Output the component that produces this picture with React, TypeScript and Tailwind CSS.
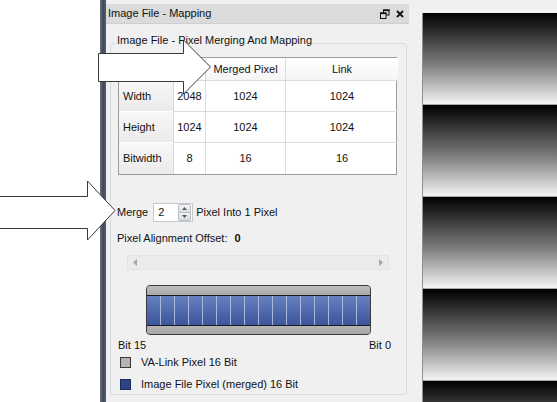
const rows = [
  { label: "Width", source: "2048", merged: "1024", link: "1024" },
  { label: "Height", source: "1024", merged: "1024", link: "1024" },
  { label: "Bitwidth", source: "8", merged: "16", link: "16" },
];

const bits = Array.from({ length: 16 }, (_, i) => i);

function SpinBox({ value }: { value: string }) {
  return (
    <div className="flex items-center w-[40px] h-[19px] bg-white border border-[#c5c8ce]">
      <span className="flex-1 pl-[4px] leading-none">{value}</span>
      <div className="flex flex-col w-[13px] h-[17px] mr-[1px]">
        <div className="flex-1 flex items-center justify-center bg-gradient-to-b from-[#f6f6f6] to-[#dedede] border border-[#b8bcc4] rounded-t-[2px]">
          <svg width="5" height="3" viewBox="0 0 5 3">
            <path d="M0 3 L2.5 0 L5 3 Z" fill="#4a5a78" />
          </svg>
        </div>
        <div className="flex-1 flex items-center justify-center bg-gradient-to-b from-[#f2f2f2] to-[#dadada] border border-t-0 border-[#b8bcc4] rounded-b-[2px]">
          <svg width="5" height="3" viewBox="0 0 5 3">
            <path d="M0 0 L2.5 3 L5 0 Z" fill="#4a5a78" />
          </svg>
        </div>
      </div>
    </div>
  );
}

function MappingTable() {
  return (
    <div className="ml-[7px] mt-[13px] w-[279px] grid grid-cols-[55px_32px_80px_112px] border border-[#9c9c9c] bg-white">
      {/* header row */}
      <div className="h-[23px] bg-[#f4f4f4] border-r border-b border-[#dcdcdc]" />
      <div className="h-[23px] bg-white border-r border-b border-[#dcdcdc]" />
      <div className="h-[23px] flex items-center justify-center bg-gradient-to-b from-white to-[#f5f5f5] border-r border-b border-[#dcdcdc]">
        Merged Pixel
      </div>
      <div className="h-[23px] flex items-center justify-center bg-gradient-to-b from-white to-[#f5f5f5] border-b border-[#dcdcdc]">
        Link
      </div>

      {rows.map((row, index) => {
        const last = index === rows.length - 1;
        return [
          <div
            key={row.label}
            className={`h-[31px] flex items-center pl-[4px] bg-gradient-to-b from-[#f7f7f7] to-[#ebebeb] border-r border-[#d6d6d6] ${last ? "" : "border-b border-b-white"}`}
          >
            {row.label}
          </div>,
          <div
            key={row.label + "-src"}
            className={`h-[31px] flex items-center justify-center border-r border-[#dcdcdc] ${last ? "" : "border-b"}`}
          >
            {row.source}
          </div>,
          <div
            key={row.label + "-merged"}
            className={`h-[31px] flex items-center justify-center border-r border-[#dcdcdc] ${last ? "" : "border-b"}`}
          >
            {row.merged}
          </div>,
          <div
            key={row.label + "-link"}
            className={`h-[31px] flex items-center justify-center border-[#dcdcdc] ${last ? "" : "border-b"}`}
          >
            {row.link}
          </div>,
        ];
      })}
    </div>
  );
}

function BitBar() {
  return (
    <div className="ml-[35px] mt-[15px] w-[225px] h-[50px] flex flex-col rounded-[4px] border border-[#3c3c3c] bg-[#b2b2b2] overflow-hidden">
      <div className="h-[9px] bg-gradient-to-b from-[#bdbdbd] to-[#a9a9a9]" />
      <div className="h-[31px] flex border-y border-[#1c1c1c] bg-gradient-to-b from-[#6581c0] to-[#3d559b]">
        {bits.map((b) => (
          <div
            key={b}
            className={`flex-1 ${b < bits.length - 1 ? "border-r border-[#a9b7d8]" : ""}`}
          />
        ))}
      </div>
      <div className="flex-1 bg-gradient-to-b from-[#b5b5b5] to-[#a6a6a6]" />
    </div>
  );
}

export default function App() {
  return (
    <div className="relative w-[557px] h-[402px] overflow-hidden flex bg-white text-[11px] leading-[13px] text-[#111] font-['Liberation_Sans',Arial,sans-serif]">
      <div className="w-[100px] shrink-0" />

      {/* docked panel */}
      <div className="w-[322px] shrink-0 flex bg-[#f0f0f0]">
        <div className="w-[6px] bg-gradient-to-r from-[#6d7585] via-[#3f4757] to-[#565e6e]" />
        <div className="flex-1 flex flex-col pt-[4px]">
          {/* title bar */}
          <div className="w-[303px] h-[20px] flex items-center pl-[2px] pr-[5px] bg-[#dbdbdb] border-b border-[#cfcfcf]">
            <span className="flex-1">Image File - Mapping</span>
            <svg width="10" height="10" viewBox="0 0 10 10" className="mr-[6px]">
              <rect x="3.5" y="1" width="5.5" height="5" fill="none" stroke="#111" strokeWidth="1" />
              <rect x="3" y="0.5" width="6.5" height="1.6" fill="#111" />
              <rect x="0.5" y="4" width="5.5" height="5.5" fill="#dbdbdb" stroke="#111" strokeWidth="1" />
              <rect x="0" y="3.5" width="6.5" height="1.6" fill="#111" />
            </svg>
            <svg width="8" height="8" viewBox="0 0 8 8">
              <path d="M1 1 L7 7 M7 1 L1 7" stroke="#111" strokeWidth="1.8" />
            </svg>
          </div>

          {/* group box */}
          <div className="relative ml-[4px] mt-[19px] w-[297px] h-[352px] flex flex-col border border-[#d5dde3] rounded-[3px]">
            <span className="absolute top-[-10px] left-[5px] px-[1px] bg-[#f0f0f0]">
              Image File - Pixel Merging And Mapping
            </span>

            <MappingTable />

            <div className="mt-[28px] pl-[6px] h-[19px] flex items-center">
              <span className="mr-[5px]">Merge</span>
              <SpinBox value="2" />
              <span className="ml-[3px]">Pixel Into 1 Pixel</span>
            </div>

            <div className="mt-[10px] pl-[6px] h-[13px] flex items-center">
              <span>Pixel Alignment Offset:</span>
              <span className="ml-[7px] font-bold">0</span>
            </div>

            {/* offset scroller */}
            <div className="ml-[16px] mt-[10px] w-[262px] h-[15px] flex items-center justify-between px-[5px] bg-[#ebebeb] border border-[#e4e4e4]">
              <svg width="4" height="7" viewBox="0 0 4 7">
                <path d="M4 0 L0 3.5 L4 7 Z" fill="#a6a6a6" />
              </svg>
              <svg width="4" height="7" viewBox="0 0 4 7">
                <path d="M0 0 L4 3.5 L0 7 Z" fill="#a6a6a6" />
              </svg>
            </div>

            <BitBar />

            <div className="ml-[7px] mt-[4px] w-[273px] h-[13px] flex justify-between">
              <span>Bit 15</span>
              <span>Bit 0</span>
            </div>

            <div className="mt-[4px] h-[13px] flex items-center pl-[9px]">
              <div className="w-[11px] h-[11px] bg-[#b4b4b4] border border-[#3a3a3a]" />
              <span className="ml-[10px]">VA-Link Pixel 16 Bit</span>
            </div>
            <div className="mt-[9px] h-[13px] flex items-center pl-[9px]">
              <div className="w-[11px] h-[11px] bg-[#2b4487] border border-[#1e2c55]" />
              <span className="ml-[10px]">Image File Pixel (merged) 16 Bit</span>
            </div>
          </div>
        </div>
      </div>

      {/* image preview strip */}
      <div className="flex-1 pt-[13px] bg-[#f0f0f0]">
        <div className="flex flex-col border-l border-[#8e8e8e]">
          {[0, 1, 2, 3, 4].map((i) => (
            <div
              key={i}
              className="h-[92px] shrink-0 border-b border-[#a8a8a8] bg-[linear-gradient(to_bottom,#000000,#7a7a7a_55%,#f4f4f4)]"
            />
          ))}
        </div>
      </div>

      {/* callout arrows */}
      <svg className="absolute left-0 top-0" width="557" height="402" viewBox="0 0 557 402">
        <polygon
          points="98.5,53.5 183.5,53.5 183.5,40 210.5,67 183.5,94 183.5,81.5 98.5,81.5"
          fill="white"
          stroke="#3a3a3a"
          strokeWidth="1"
        />
        <polygon
          points="-1,196.5 87.5,196.5 87.5,181 115,210.5 87.5,240 87.5,228.5 -1,228.5"
          fill="white"
          stroke="#3a3a3a"
          strokeWidth="1"
        />
      </svg>
    </div>
  );
}
